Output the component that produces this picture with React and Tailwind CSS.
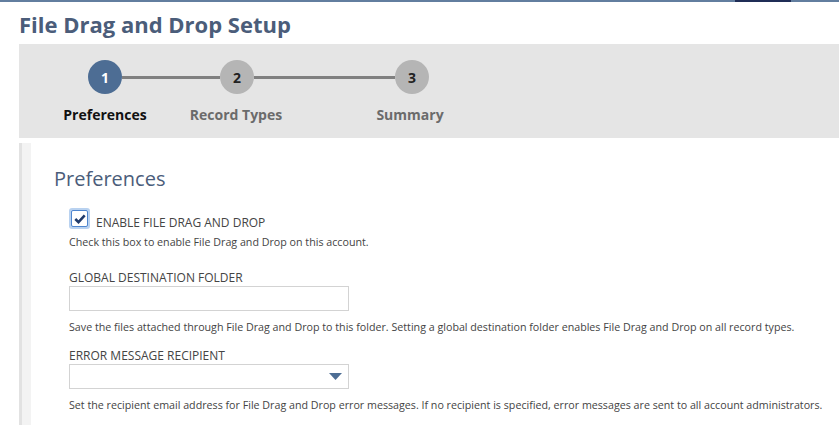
const Step = ({ n, active }) => (
  <div
    className={`w-[34px] h-[34px] rounded-full flex items-center justify-center text-[14px] font-bold shrink-0 ${
      active ? "bg-[#4d6d94] text-white" : "bg-[#b5b5b5] text-[#222]"
    }`}
  >
    {n}
  </div>
);

const Field = ({ label, help, select, top }) => (
  <div className={top}>
    <div className="text-[12px] uppercase text-[#444] leading-[16px]">{label}</div>
    <div className="w-[280px] h-[25px] border border-[#d3d3d3] bg-white flex items-center justify-end pr-[6px]">
      {select && (
        <svg width="13" height="7" viewBox="0 0 13 7">
          <path d="M0 0 H13 L6.5 7 Z" fill="#4d6d94" />
        </svg>
      )}
    </div>
    <p className="mt-[9px] text-[10.7px] text-[#444] leading-[15px]">{help}</p>
  </div>
);

const App = () => {
  return (
    <div className="w-[839px] h-[425px] bg-white overflow-hidden font-['Open_Sans',sans-serif]">
      {/* Top bar */}
      <div className="h-[2px] bg-[#627e9f] flex">
        <div className="ml-[735px] w-[56px] bg-[#1f2d56]" />
      </div>

      <h1 className="ml-[19px] mt-[6px] text-[22px] font-bold text-[#4b5d7a] leading-[32px]">
        File Drag and Drop Setup
      </h1>

      {/* Steps */}
      <div className="ml-[19px] mt-[4px] h-[94px] bg-[#e5e5e5] pt-[16px]">
        <div className="flex items-center pl-[69px]">
          <Step n="1" active />
          <div className="w-[98px] h-[3px] bg-[#808080]" />
          <Step n="2" />
          <div className="w-[141px] h-[3px] bg-[#808080]" />
          <Step n="3" />
        </div>
        <div className="flex mt-[11px] text-[14px] font-bold leading-[20px]">
          <div className="w-[120px] ml-[26px] text-center text-[#111]">Preferences</div>
          <div className="w-[120px] ml-[11px] text-center text-[#6b6b6b]">Record Types</div>
          <div className="w-[120px] ml-[54px] text-center text-[#6b6b6b]">Summary</div>
        </div>
      </div>

      {/* Body */}
      <div className="ml-[19px] mt-[5px] flex">
        <div className="w-[3px] bg-[#e2e2e2] h-[300px]" />
        <div className="w-[9px] bg-[#f3f3f3] h-[300px]" />
        <div className="pl-[23px] pt-[22px]">
          <h2 className="text-[20px] text-[#4b5d7a] leading-[28px]">Preferences</h2>
          <div className="ml-[15px] mt-[15px]">
            <div className="flex items-start">
              <div className="w-[21px] h-[21px] rounded-[3px] bg-[#b9d2f0] flex items-center justify-center">
                <div className="w-[17px] h-[17px] rounded-[2px] border border-[#4f86cf] bg-white flex items-center justify-center">
                  <svg width="12" height="10" viewBox="0 0 12 10">
                    <path d="M1.3 5 L4.5 8.2 L10.7 1.3" stroke="#1f3a6b" strokeWidth="2.5" fill="none" />
                  </svg>
                </div>
              </div>
              <span className="ml-[6px] mt-[7px] text-[12px] uppercase text-[#444] leading-[16px]">
                Enable File Drag and Drop
              </span>
            </div>
            <p className="mt-[4px] text-[10.7px] text-[#444] leading-[15px]">
              Check this box to enable File Drag and Drop on this account.
            </p>
            <Field
              top="mt-[20px]"
              label="Global Destination Folder"
              help="Save the files attached through File Drag and Drop to this folder. Setting a global destination folder enables File Drag and Drop on all record types."
            />
            <Field
              top="mt-[13px]"
              label="Error Message Recipient"
              select
              help="Set the recipient email address for File Drag and Drop error messages. If no recipient is specified, error messages are sent to all account administrators."
            />
          </div>
        </div>
      </div>
    </div>
  );
};

export default App;
